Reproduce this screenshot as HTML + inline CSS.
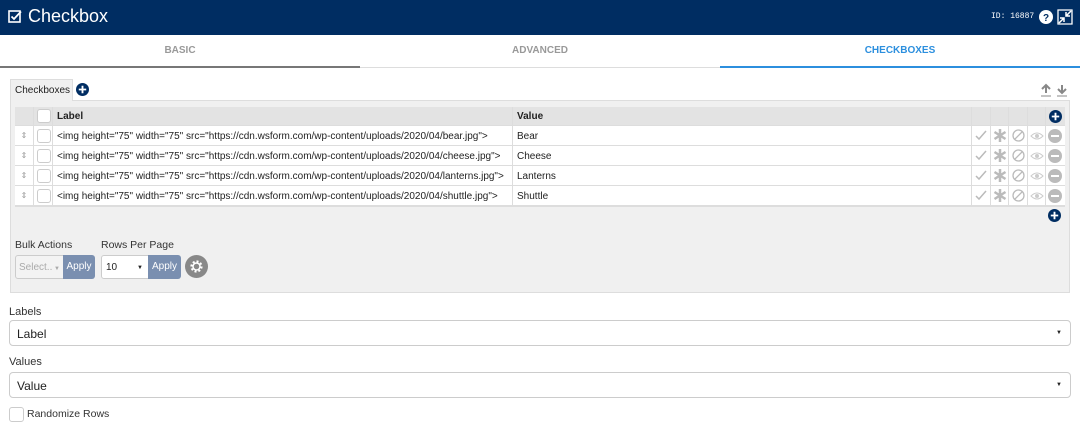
<!DOCTYPE html>
<html><head><meta charset="utf-8"><style>
*{box-sizing:border-box;margin:0;padding:0}
body{width:1080px;height:437px;overflow:hidden;background:#fff;font-family:"Liberation Sans",Arial,sans-serif;position:relative;color:#222}
.a{position:absolute}
.hdr{left:0;top:0;width:1080px;height:35px;background:#002d62}
.tab{top:35px;height:33px;width:360px;text-align:center;font-size:10px;font-weight:bold;line-height:32px;color:#999}
.row{left:15px;width:1050px;height:20px;border-bottom:1px solid #ddd;background:#fff;font-size:10px}
.c{position:absolute;top:0;height:100%;border-right:1px solid #ddd}
.cb{position:absolute;width:14px;height:14px;border:1px solid #ccc;border-radius:3px;background:#fff}
.lbl{font-size:11px;color:#333}
.sel{border:1px solid #ccc;border-radius:4px;background:#fff}
</style></head><body>
<div class="a hdr"></div>
<svg class="a" style="left:8px;top:9px" width="15" height="15" viewBox="0 0 15 15"><rect x="1" y="2" width="11" height="11" fill="none" stroke="#fff" stroke-width="1.6"/><path d="M3.5 7.5l2.5 2.5 7-7.5" fill="none" stroke="#fff" stroke-width="1.8"/></svg>
<div class="a" style="left:28px;top:6px;color:#fff;font-size:18px">Checkbox</div>
<div class="a" style="left:991px;top:12px;color:#fff;font-family:'Liberation Mono',monospace;font-size:8px">ID: 16887</div>
<svg class="a" style="left:1039px;top:10px" width="14" height="14" viewBox="0 0 14 14"><circle cx="7" cy="7" r="7" fill="#fff"/><text x="7" y="11" text-anchor="middle" font-size="10" font-weight="bold" fill="#002d62" font-family="Liberation Sans">?</text></svg>
<svg class="a" style="left:1057px;top:9px" width="16" height="16" viewBox="0 0 16 16"><path d="M1 1h14v14H1z" fill="none" stroke="#fff" stroke-width="1.3"/><path d="M14 2L9 7M9 3v4h4M2 14l5-5M3 9h4v4" fill="none" stroke="#fff" stroke-width="1.5"/></svg>

<div class="a tab" style="left:0;border-bottom:2px solid #777">BASIC</div>
<div class="a tab" style="left:360px;border-bottom:1px solid #ddd">ADVANCED</div>
<div class="a tab" style="left:720px;border-bottom:2px solid #2c8fde;color:#2c8fde">CHECKBOXES</div>

<div class="a" style="left:10px;top:100px;width:1060px;height:193px;background:#f0f0f0;border:1px solid #ddd"></div>
<div class="a" style="left:10px;top:79px;width:63px;height:22px;background:#f0f0f0;border:1px solid #ddd;border-bottom:none;font-size:10px;line-height:21px;padding-left:4px;white-space:nowrap">Checkboxes</div>
<svg class="a" style="left:76px;top:83px" width="13" height="13" viewBox="0 0 14 14"><circle cx="7" cy="7" r="7" fill="#002d62"/><path d="M7 3v8M3 7h8" stroke="#fff" stroke-width="2"/></svg>
<svg class="a" style="left:1040px;top:83px" width="28" height="14" viewBox="0 0 28 14"><path d="M6 2v8M2 6l4-4 4 4" fill="none" stroke="#888" stroke-width="2"/><path d="M1 13h10M17 13h10" stroke="#888" stroke-width="1"/><path d="M22 2v8M18 6l4 4 4-4" fill="none" stroke="#888" stroke-width="2"/></svg>

<div class="a" style="left:15px;top:107px;width:1050px;height:100px;border:1px solid #ddd;background:#fff"></div>
<div class="a row" style="top:107px;height:19px;background:#e3e3e3;font-weight:bold">
<div class="c" style="left:0;width:19px"></div><div class="c" style="left:19px;width:19px"><div class="cb" style="left:3px;top:2px"></div></div>
<div class="c" style="left:38px;width:460px;padding:4px 4px">Label</div><div class="c" style="left:498px;width:459px;padding:4px 4px">Value</div>
<div class="c" style="left:957px;width:19px"></div><div class="c" style="left:976px;width:18px"></div><div class="c" style="left:994px;width:19px"></div><div class="c" style="left:1013px;width:18px"></div>
<svg style="position:absolute;left:1034px;top:3px" width="13" height="13" viewBox="0 0 14 14"><circle cx="7" cy="7" r="7" fill="#002d62"/><path d="M7 3v8M3 7h8" stroke="#fff" stroke-width="2"/></svg>
</div>
<div id="rows"></div>
<script>
var d=[["bear","Bear"],["cheese","Cheese"],["lanterns","Lanterns"],["shuttle","Shuttle"]],h="";
d.forEach(function(r,i){var t=126+i*20;h+='<div class="a row" style="top:'+t+'px"><div class="c" style="left:0;width:19px;color:#999;font-size:8px;text-align:center;line-height:19px">&#8661;</div><div class="c" style="left:19px;width:19px"><div class="cb" style="left:3px;top:3px"></div></div><div class="c" style="left:38px;width:460px;padding:5px 4px;white-space:nowrap">&lt;img height="75" width="75" src="https://cdn.wsform.com/wp-content/uploads/2020/04/'+r[0]+'.jpg"&gt;</div><div class="c" style="left:498px;width:459px;padding:5px 4px">'+r[1]+'</div><div class="c" style="left:957px;width:19px"><svg width="19" height="19" viewBox="0 0 19 19"><path d="M4 10l3 3 7-8" fill="none" stroke="#bbb" stroke-width="1.5"/></svg></div><div class="c" style="left:976px;width:18px"><svg width="18" height="19" viewBox="0 0 18 19"><path d="M9 3v13M3.5 6l11 7M14.5 6l-11 7" stroke="#bbb" stroke-width="2.5"/></svg></div><div class="c" style="left:994px;width:19px"><svg width="19" height="19" viewBox="0 0 19 19"><circle cx="9.5" cy="9.5" r="5.5" fill="none" stroke="#bbb" stroke-width="1.3"/><path d="M6 13l7-7" stroke="#bbb" stroke-width="1.3"/></svg></div><div class="c" style="left:1013px;width:18px"><svg width="18" height="19" viewBox="0 0 18 19"><path d="M3 10q6-6 12 0q-6 6-12 0z" fill="none" stroke="#ccc" stroke-width="1"/><circle cx="9" cy="10" r="2" fill="#ccc"/></svg></div><svg style="position:absolute;left:1033px;top:3px" width="14" height="14" viewBox="0 0 14 14"><circle cx="7" cy="7" r="7" fill="#bbb"/><path d="M3 7h8" stroke="#fff" stroke-width="2"/></svg></div>'});
document.getElementById("rows").outerHTML=h;
</script>
<svg class="a" style="left:1048px;top:209px" width="13" height="13" viewBox="0 0 14 14"><circle cx="7" cy="7" r="7" fill="#002d62"/><path d="M7 3v8M3 7h8" stroke="#fff" stroke-width="2"/></svg>

<div class="a lbl" style="left:15px;top:239px;font-size:10.5px">Bulk Actions</div>
<div class="a lbl" style="left:101px;top:239px;font-size:10.5px">Rows Per Page</div>
<div class="a" style="left:15px;top:255px;width:49px;height:24px;background:#f3f3f3;border:1px solid #ccc;border-radius:3px 0 0 3px;font-size:10px;color:#aaa;padding:6px 3px;white-space:nowrap;overflow:hidden">Select..<span style="font-size:6px"> &#9660;</span></div>
<div class="a" style="left:63px;top:255px;width:32px;height:24px;background:#7a8fb0;border-radius:0 3px 3px 0;color:#fff;font-size:10px;text-align:center;line-height:24px">Apply</div>
<div class="a" style="left:101px;top:255px;width:48px;height:24px;background:#fff;border:1px solid #ccc;border-radius:3px 0 0 3px;font-size:10px;padding:6px 4px">10<span style="position:absolute;right:5px;font-size:6px;top:9px">&#9660;</span></div>
<div class="a" style="left:148px;top:255px;width:33px;height:24px;background:#7a8fb0;border-radius:0 3px 3px 0;color:#fff;font-size:10px;text-align:center;line-height:24px">Apply</div>
<svg class="a" style="left:185px;top:255px" width="23" height="23" viewBox="0 0 23 23"><circle cx="11.5" cy="11.5" r="11.5" fill="#888"/><circle cx="11.5" cy="11.5" r="5" fill="none" stroke="#fff" stroke-width="2.2" stroke-dasharray="2 1.9"/><circle cx="11.5" cy="11.5" r="3.5" fill="none" stroke="#fff" stroke-width="1.5"/></svg>

<div class="a lbl" style="left:9px;top:306px">Labels</div>
<div class="a sel" style="left:9px;top:320px;width:1062px;height:26px;font-size:12px;padding:6px 7px">Label<span style="position:absolute;right:8px;top:9px;font-size:6px">&#9660;</span></div>
<div class="a lbl" style="left:9px;top:356px">Values</div>
<div class="a sel" style="left:9px;top:372px;width:1062px;height:26px;font-size:12px;padding:6px 7px">Value<span style="position:absolute;right:8px;top:9px;font-size:6px">&#9660;</span></div>
<div class="a" style="left:9px;top:407px;width:15px;height:15px;border:1px solid #ccc;border-radius:3px"></div>
<div class="a lbl" style="left:27px;top:408px;font-size:10.5px">Randomize Rows</div>
</body></html>
